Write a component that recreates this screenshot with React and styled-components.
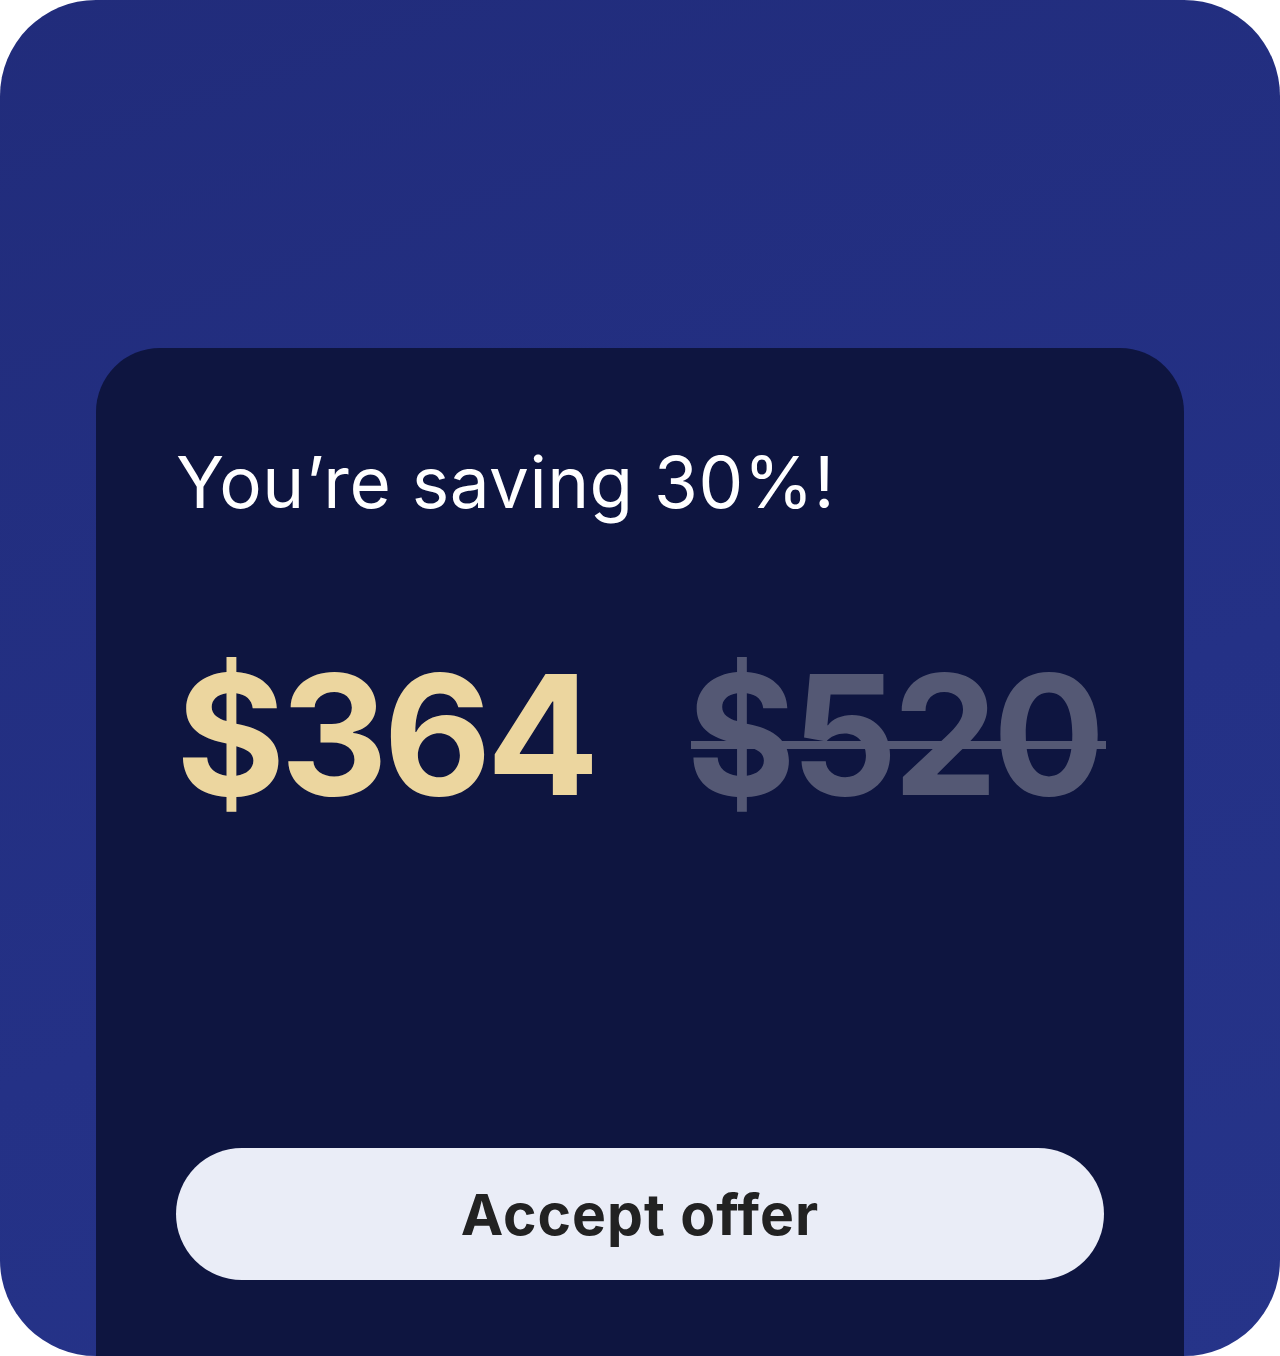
import styled, { createGlobalStyle } from "styled-components";

const GlobalStyle = createGlobalStyle`
  html, body {
    margin: 0;
    padding: 0;
    background: #ffffff;
  }
  body {
    font-family: "Inter", "Liberation Sans", sans-serif;
  }
`;

const Frame = styled.div`
  box-sizing: border-box;
  width: 1280px;
  height: 1356px;
  border-radius: 96px;
  overflow: hidden;
  background: linear-gradient(160deg, #212c7b 0%, #243186 60%, #263489 100%);
  padding: 348px 96px 0;
`;

const Card = styled.section`
  box-sizing: border-box;
  height: 1100px;
  border-radius: 64px;
  background: #0e1540;
  padding: 84px 80px 0;
  display: flex;
  flex-direction: column;
`;

const Heading = styled.h2`
  margin: 0;
  font-weight: 400;
  font-size: 71px;
  line-height: 100px;
  color: #ffffff;
  letter-spacing: 0.5px;
`;

const PriceRow = styled.div`
  display: flex;
  align-items: baseline;
  gap: 92px;
  margin-top: 112px;
`;

const Price = styled.span`
  position: relative;
  font-weight: 700;
  font-size: 167px;
  line-height: 180px;
  letter-spacing: -5px;
  color: ${(p) => (p.$old ? "#545874" : "#ecd69f")};

  ${(p) =>
    p.$old &&
    `
    &::after {
      content: "";
      position: absolute;
      left: 4px;
      right: -6px;
      top: 54%;
      height: 8px;
      background: #545874;
    }
  `}
`;

const Button = styled.button`
  margin-top: auto;
  margin-bottom: 168px;
  height: 132px;
  width: 100%;
  border: none;
  border-radius: 66px;
  background: #eaedf7;
  color: #222222;
  font-family: "Inter", "Liberation Sans", sans-serif;
  font-weight: 700;
  font-size: 57px;
  letter-spacing: 1px;
  cursor: pointer;
`;

export default function App() {
  return (
    <>
      <GlobalStyle />
      <Frame>
        <Card>
          <Heading>You’re saving 30%!</Heading>
          <PriceRow>
            <Price>$364</Price>
            <Price $old>$520</Price>
          </PriceRow>
          <Button>Accept offer</Button>
        </Card>
      </Frame>
    </>
  );
}
